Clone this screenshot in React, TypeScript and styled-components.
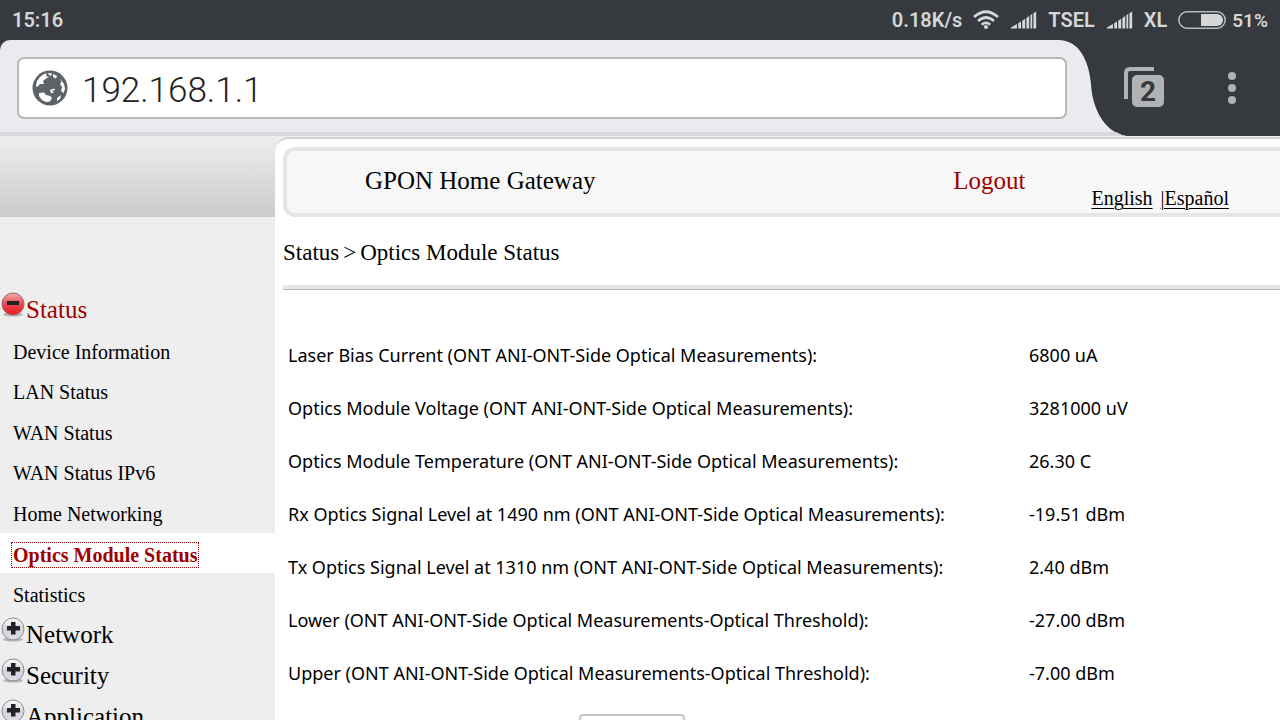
import React from "react";
import styled, { createGlobalStyle, css } from "styled-components";

const serif = css`font-family: "Liberation Serif", "Times New Roman", serif;`;
const sans = css`font-family: "Noto Sans", sans-serif;`;
const roboto = css`font-family: Roboto, sans-serif;`;

const GlobalStyle = createGlobalStyle`
  *, *::before, *::after { box-sizing: border-box; }
  body { margin: 0; background: #fff; color: #000; }
`;

const Screen = styled.div`
  display: flex;
  flex-direction: column;
  height: 100vh;
  overflow: hidden;
`;

const StatusBar = styled.header`
  ${roboto}
  flex: none;
  display: flex;
  align-items: center;
  justify-content: space-between;
  height: 40px;
  padding: 0 12px;
  background: #363a3e;
  color: #d5d6d7;
  font-size: 20px;
  font-weight: 600;
`;

const Indicators = styled.div`
  display: flex;
  align-items: center;
  svg { display: block; }
`;

const Indicator = styled.span<{ $gap?: number }>`
  margin-right: ${(p) => p.$gap ?? 11}px;
`;

const Charge = styled.span`
  font-size: 19px;
`;

const BrowserBar = styled.div`
  flex: none;
  display: flex;
  height: 96px;
  background: #363a3e;
`;

const TabArea = styled.div`
  flex: 1;
  display: flex;
  padding: 17px 0 0 17px;
  background: #ebeaef;
  border-bottom: 4px solid #d9d8dd;
  border-top-left-radius: 10px;
`;

const AddressBox = styled.label`
  flex: 1;
  display: flex;
  align-items: center;
  gap: 14px;
  height: 62px;
  margin-right: -9px;
  padding: 0 13px;
  background: #fff;
  border: 2px solid #b7b7b7;
  border-radius: 7px;
  z-index: 1;
`;

const AddressInput = styled.input`
  ${roboto}
  flex: 1;
  min-width: 0;
  border: 0;
  padding: 4px 0 0;
  outline: 0;
  background: none;
  font-size: 35px;
  font-weight: 300;
  color: #222;
`;

const TabEdge = styled.svg`
  display: block;
  flex: none;
`;

const Actions = styled.div`
  flex: none;
  display: flex;
  align-items: center;
  justify-content: space-between;
  width: 156px;
  margin-left: -2px;
  padding: 0 40px 0 0;
`;

const IconButton = styled.button`
  display: block;
  padding: 0;
  border: 0;
  background: none;
  svg { display: block; }
`;

const Page = styled.div`
  flex: 1;
  display: flex;
  min-height: 0;
  background: #eee;
`;

const Sidebar = styled.aside`
  ${serif}
  flex: none;
  width: 275px;
`;

const SidebarTop = styled.div`
  height: 81px;
  margin-bottom: 72px;
  background: linear-gradient(#efeeed, #cbcbcb);
`;

const Section = styled.a<{ $open?: boolean }>`
  display: flex;
  align-items: center;
  gap: 1px;
  height: 41px;
  font-size: 25px;
  line-height: 40px;
  text-decoration: none;
  color: ${(p) => (p.$open ? "#a00000" : "#000")};
  svg { flex: none; margin-bottom: 10px; }
`;

const SubMenu = styled.ul`
  display: grid;
  grid-auto-rows: 1fr;
  height: 284px;
  margin: 0;
  padding: 0;
  list-style: none;
`;

const SubItem = styled.li<{ $active?: boolean }>`
  display: flex;
  align-items: center;
  padding: 3px 0 0 12px;
  background: ${(p) => (p.$active ? "#fff" : "none")};
`;

const SubLink = styled.a<{ $active?: boolean }>`
  padding: 0 1px;
  font-size: 20px;
  line-height: 24px;
  text-decoration: none;
  color: #000;
  ${(p) => p.$active && css`
    color: #a00000;
    font-weight: 700;
    outline: 1px dotted #a00000;
  `}
`;

const Content = styled.main`
  flex: 1;
  min-width: 0;
  margin-top: 1px;
  padding: 8px 0 0 8px;
  background: #fff;
  border-top: 2px solid #d2d2d2;
  border-top-left-radius: 14px;
`;

const Banner = styled.div`
  ${serif}
  display: flex;
  height: 70px;
  padding: 0 51px 0 78px;
  border: 4px solid #e6e4e4;
  border-right: 0;
  border-radius: 12px 0 0 12px;
  background: #f7f7f7;
  font-size: 25px;
  line-height: 60px;
`;

const Title = styled.h1`
  flex: 1;
  margin: 0;
  font-size: inherit;
  font-weight: 400;
`;

const Logout = styled.a`
  color: #a00000;
  text-decoration: none;
`;

const Languages = styled.div`
  display: flex;
  align-items: flex-end;
  gap: 8px;
  margin-left: 66px;
  padding-bottom: 3px;
  font-size: 20px;
  line-height: 24px;
  a {
    color: #000;
    text-decoration-thickness: 1px;
    text-underline-offset: 3px;
  }
`;

const Breadcrumb = styled.div`
  ${serif}
  height: 68px;
  font-size: 23px;
  line-height: 72px;
`;

const Separator = styled.span`
  margin: 0 4px;
`;

const Rule = styled.hr`
  height: 5px;
  margin: 0 0 38px;
  border: 0;
  border-bottom: 1px solid #b8b8b8;
  background: #e6e6e6;
`;

const Readings = styled.table`
  ${sans}
  width: 100%;
  border-collapse: collapse;
  table-layout: fixed;
  font-size: 18px;
  th, td { height: 53px; padding: 0 0 0 5px; text-align: left; font-weight: 400; white-space: nowrap; }
  th { width: 741px; }
`;

const RefreshButton = styled.button`
  ${sans}
  display: block;
  width: 106px;
  height: 36px;
  margin: 15px 0 0 296px;
  border: 2px solid #c9c9c9;
  border-radius: 4px;
  background: #fff;
  font-size: 18px;
`;

const Wifi = () => (
  <svg width="26" height="20" viewBox="0 0 26 20" fill="none" stroke="#d5d6d7" strokeWidth="2.7">
    <path d="M1 7Q13-3.500 25 7M5 11Q13 4 21 11M8.800 14.700Q13 11 17.200 14.700" />
    <circle cx="13" cy="17" r="2.100" fill="#d5d6d7" stroke="none" />
  </svg>
);

const Signal = () => (
  <svg width="26" height="18" viewBox="0 0 26 18" fill="#d5d6d7">
    <path d="M0 17.500V16.500L6 13V17.500ZM7.200 12.300L10 10.500V17.500H7.200ZM11.200 9.700L14.200 7.700V17.500H11.200ZM15.400 7L18.200 5V17.500H15.400ZM19.400 4.300L21.200 3V17.500H19.400ZM22.400 2.200L25.200 0.500V17.500H22.400Z" />
  </svg>
);

const Battery = () => (
  <svg width="48" height="18" viewBox="0 0 48 18">
    <rect x="0.800" y="0.800" width="46.400" height="16.400" rx="8.200" fill="none" stroke="#b9bbbc" strokeWidth="1.500" />
    <path d="M23 3H39A6 6 0 0 1 39 15H23Z" fill="#d5d6d7" />
  </svg>
);

const Globe = () => (
  <svg width="36" height="36" viewBox="0 0 36 36">
    <circle cx="18" cy="18" r="17.500" fill="#5f6368" />
    <path
      fill="#fff"
      d="M4 16L5 11L8 7L12 4L15 3.500L14 6L17 7L14 8.500L11 11L12 14L8 14L5 17ZM16 3L20 3.500L19 6L17 5ZM21 4L25 6L24 8.500L21 7ZM28 8.500L32 14L33 19L31.500 23L29 21L30 17L28 14L29.500 12ZM7 23L12 22.500L14 25L18 26L20 28L18 31.500L14 32L10 30L7 26ZM18 20L22 18.500L23 20L20 21L22 23L19 23ZM25 28L29 25L28 29L25 31Z"
    />
  </svg>
);

const Toggle = ({ open }: { open?: boolean }) => {
  const id = open ? "toggle-minus" : "toggle-plus";
  return (
    <svg width="25" height="26" viewBox="0 0 25 26" aria-hidden="true">
      <defs>
        <linearGradient id={id} x1="0" y1="0" x2="0" y2="1">
          <stop offset="0" stopColor={open ? "#f6b0b0" : "#fdfdfd"} />
          <stop offset="0.500" stopColor={open ? "#e64a4e" : "#d4d4de"} />
          <stop offset="1" stopColor={open ? "#f01822" : "#dcdce8"} />
        </linearGradient>
      </defs>
      <ellipse cx="13" cy="22.500" rx="10" ry="2" fill="#b5b5b5" />
      <circle cx="13" cy="12" r="11" fill={`url(#${id})`} stroke={open ? "#a06466" : "#8c8c92"} />
      <path d={open ? "M7 9H19V13H7Z" : "M11 5H15.500V9H20V13.500H15.500V17.500H11V13.500H7V9H11Z"} fill="#222" />
    </svg>
  );
};

const items = ["Device Information", "LAN Status", "WAN Status", "WAN Status IPv6", "Home Networking", "Optics Module Status", "Statistics"];
const sections = ["Network", "Security", "Application"];
const readings = [
  ["Laser Bias Current (ONT ANI-ONT-Side Optical Measurements):", "6800 uA"],
  ["Optics Module Voltage (ONT ANI-ONT-Side Optical Measurements):", "3281000 uV"],
  ["Optics Module Temperature (ONT ANI-ONT-Side Optical Measurements):", "26.30 C"],
  ["Rx Optics Signal Level at 1490 nm (ONT ANI-ONT-Side Optical Measurements):", "-19.51 dBm"],
  ["Tx Optics Signal Level at 1310 nm (ONT ANI-ONT-Side Optical Measurements):", "2.40 dBm"],
  ["Lower (ONT ANI-ONT-Side Optical Measurements-Optical Threshold):", "-27.00 dBm"],
  ["Upper (ONT ANI-ONT-Side Optical Measurements-Optical Threshold):", "-7.00 dBm"],
];

export default function App() {
  return (
    <Screen>
      <GlobalStyle />
      <StatusBar>
        <span>15:16</span>
        <Indicators>
          <Indicator>0.18K/s</Indicator>
          <Indicator $gap={12}><Wifi /></Indicator>
          <Indicator><Signal /></Indicator>
          <Indicator $gap={12}>TSEL</Indicator>
          <Indicator><Signal /></Indicator>
          <Indicator>XL</Indicator>
          <Indicator $gap={6}><Battery /></Indicator>
          <Charge>51%</Charge>
        </Indicators>
      </StatusBar>
      <BrowserBar>
        <TabArea>
          <AddressBox>
            <Globe />
            <AddressInput aria-label="Address" defaultValue="192.168.1.1" />
          </AddressBox>
        </TabArea>
        <TabEdge width="68" height="96" viewBox="0 0 68 96" aria-hidden="true">
          <path d="M0 0C22 0 31 22 33 44C34 66 45 92 68 96H0Z" fill="#ebeaef" />
          <path d="M0 92H58Q63 95 68 96H0Z" fill="#d9d8dd" />
        </TabEdge>
        <Actions>
          <IconButton aria-label="Tabs">
            <svg width="40" height="42" viewBox="0 0 40 42">
              <path d="M2 32V6Q2 2 6 2H30" fill="none" stroke="#b1b2b4" strokeWidth="4" />
              <rect x="8" y="8" width="32" height="32" rx="5" fill="#b1b2b4" />
              <text x="24" y="34" textAnchor="middle" fontFamily="Roboto, sans-serif" fontSize="28" fontWeight="700" fill="#363a3e">2</text>
            </svg>
          </IconButton>
          <IconButton aria-label="Menu">
            <svg width="16" height="34" viewBox="0 0 16 34" fill="#b1b2b4">
              <circle cx="8" cy="5" r="4" /><circle cx="8" cy="17" r="4" /><circle cx="8" cy="29" r="4" />
            </svg>
          </IconButton>
        </Actions>
      </BrowserBar>
      <Page>
        <Sidebar>
          <SidebarTop />
          <nav>
            <Section href="#status" $open><Toggle open />Status</Section>
            <SubMenu>
              {items.map((name) => {
                const active = name === "Optics Module Status";
                return <SubItem key={name} $active={active}><SubLink href="#page" $active={active}>{name}</SubLink></SubItem>;
              })}
            </SubMenu>
            {sections.map((name) => <Section key={name} href="#section"><Toggle />{name}</Section>)}
          </nav>
        </Sidebar>
        <Content>
          <Banner>
            <Title>GPON Home Gateway</Title>
            <Logout href="#logout">Logout</Logout>
            <Languages><a href="#en">English</a><a href="#es">|Español</a></Languages>
          </Banner>
          <Breadcrumb>Status<Separator>&gt;</Separator>Optics Module Status</Breadcrumb>
          <Rule />
          <Readings>
            <tbody>
              {readings.map(([label, value]) => <tr key={label}><th scope="row">{label}</th><td>{value}</td></tr>)}
            </tbody>
          </Readings>
          <RefreshButton>Refresh</RefreshButton>
        </Content>
      </Page>
    </Screen>
  );
}
